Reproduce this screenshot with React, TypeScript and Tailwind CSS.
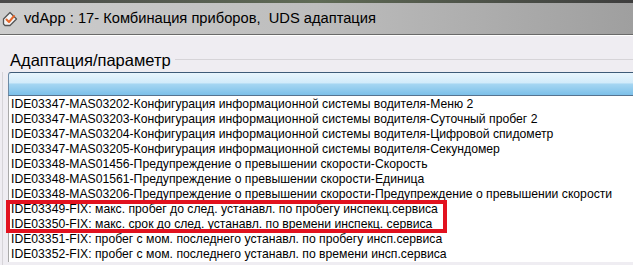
const rows = [
  "IDE03347-MAS03202-Конфигурация информационной системы водителя-Меню 2",
  "IDE03347-MAS03203-Конфигурация информационной системы водителя-Суточный пробег 2",
  "IDE03347-MAS03204-Конфигурация информационной системы водителя-Цифровой спидометр",
  "IDE03347-MAS03205-Конфигурация информационной системы водителя-Секундомер",
  "IDE03348-MAS01456-Предупреждение о превышении скорости-Скорость",
  "IDE03348-MAS01561-Предупреждение о превышении скорости-Единица",
  "IDE03348-MAS03206-Предупреждение о превышении скорости-Предупреждение о превышении скорости",
];

const marked = [
  "IDE03349-FIX: макс. пробег до след. устанавл. по пробегу инспекц.сервиса",
  "IDE03350-FIX: макс. срок до след. устанавл. по времени инспекц. сервиса",
];

const tail = [
  "IDE03351-FIX: пробег с мом. последнего устанавл. по пробегу инсп.сервиса",
  "IDE03352-FIX: пробег с мом. последнего устанавл. по времени инсп.сервиса",
];

function AppIcon() {
  return (
    <svg width="16" height="16" viewBox="0 0 16 16">
      <path d="M8 1.5 L14.5 8 L8 14.5 L3 14.5 L1.5 13 L1.5 8 Z" fill="#f4f4f4" stroke="#555" strokeWidth="1.3" strokeLinejoin="round" />
      <path d="M4.5 8.5 L7 11 L12 5" fill="none" stroke="#e4662a" strokeWidth="2" strokeLinecap="round" strokeLinejoin="round" />
    </svg>
  );
}

function Row({text}: {text: string}) {
  return <div className="h-[15px] leading-[15px] pl-[2px] whitespace-nowrap">{text}</div>;
}

export default function App() {
  return (
    <div className="w-[633px] h-[265px] overflow-hidden bg-[#efedf2] font-['Liberation_Sans',Arial,sans-serif]">
      <div className="h-[3px] bg-gradient-to-r from-[#4a4a4a] via-[#5f6a55] to-[#3e3e3e]" />
      <div className="h-[32px] flex items-center gap-[6px] pl-[2px] bg-gradient-to-r from-[#cdcdcd] via-[#bdbdbd] to-[#9f9f9f] border-b border-[#6a6a6a]">
        <AppIcon />
        <span className="text-[14.7px] text-black whitespace-nowrap">vdApp : 17- Комбинация приборов,&nbsp; UDS адаптация</span>
      </div>
      <div className="border-t border-white h-[37px] flex items-end">
        <span className="pl-[10px] text-[16.5px] leading-[20px] text-black pb-[2px] whitespace-nowrap">Адаптация/параметр</span>
        <div className="flex-1 border-t border-[#d6d4d8] mb-[12px] ml-[4px]" />
      </div>
      <div className="flex">
        <div className="w-[8px] pl-[2px]">
          <div className="h-[200px] border-l border-[#d6d4d8]" />
        </div>
        <div className="flex-1">
          <div className="h-[24px] rounded-tl-[3px] border-t border-b border-l border-t-[#3e5b78] border-b-[#56738f] border-l-[#6d8aa5] bg-[linear-gradient(to_bottom,#e8f5fd_0%,#d2ebfa_45%,#a6d6f2_50%,#7cc0e9_100%)]" />
          <div className="bg-white border-l border-[#a9a9a9] text-[12.2px] text-black pt-[1px] font-['Liberation_Sans_Narrow','Arial_Narrow',sans-serif]">
            {rows.map((r) => (
              <Row key={r} text={r} />
            ))}
            <div className="relative">
              {marked.map((r) => (
                <Row key={r} text={r} />
              ))}
              <div className="absolute left-[-3px] top-[-2px] w-[441px] h-[33px] border-[4px] border-[#e2121f]" />
            </div>
            {tail.map((r) => (
              <Row key={r} text={r} />
            ))}
          </div>
        </div>
      </div>
    </div>
  );
}
